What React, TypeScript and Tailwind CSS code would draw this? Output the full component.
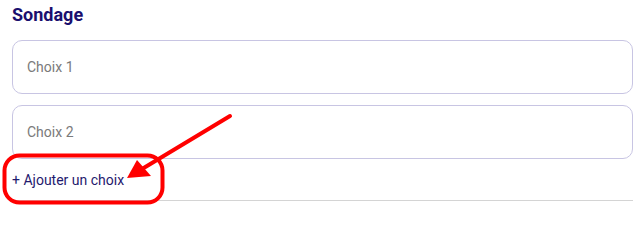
export default function App() {
  return (
    <div className="relative h-[211px] w-[644px] overflow-hidden bg-white font-['Roboto',sans-serif]">
      <div className="w-[633px] pl-3 pt-1">
        <h2 className="text-lg leading-[22px] font-bold text-[#1a0f6e]">Sondage</h2>
        <div className="mt-[14px] flex flex-col gap-[11px]">
          <input
            placeholder="Choix 1"
            className="h-[54px] w-full rounded-[10px] border border-[#c8c5e3] px-[14px] text-sm text-[#333] outline-none placeholder:text-[#7a7a7a]"
          />
          <input
            placeholder="Choix 2"
            className="h-[54px] w-full rounded-[10px] border border-[#c8c5e3] px-[14px] text-sm text-[#333] outline-none placeholder:text-[#7a7a7a]"
          />
        </div>
        <div className="flex h-[42px] items-center border-b border-[#d4d4d4]">
          <button className="text-sm text-[#1f1a6e]">+ Ajouter un choix</button>
        </div>
      </div>
      {/* red annotation drawn over the page */}
      <svg className="pointer-events-none absolute inset-0" width="644" height="211" viewBox="0 0 644 211">
        <rect x="4.5" y="155.5" width="158" height="47" rx="15" fill="none" stroke="#ff0000" strokeWidth="4" />
        <line x1="230" y1="116" x2="142" y2="169" stroke="#ff0000" strokeWidth="4" strokeLinecap="round" />
        <polygon points="127,178 137,160 151,176" fill="#ff0000" />
      </svg>
    </div>
  );
}
